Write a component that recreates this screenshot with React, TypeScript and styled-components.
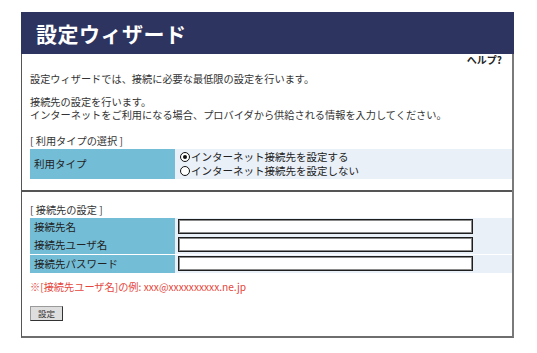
import styled, { createGlobalStyle } from "styled-components";

const GlobalStyle = createGlobalStyle`
  html, body {
    margin: 0;
    padding: 0;
    background: #ffffff;
  }
  body {
    font-family: "Noto Sans CJK JP", "Noto Sans", sans-serif;
    color: #222222;
  }
`;

const ACCOUNT_FIELDS = [
  { label: "接続先名", divided: false },
  { label: "接続先ユーザ名", divided: false },
  { label: "接続先パスワード", divided: true },
];

export default function App() {
  return (
    <>
      <GlobalStyle />
      <Page>
        <Frame>
          <Header>設定ウィザード</Header>
          <HelpLine>ヘルプ?</HelpLine>
          <Section>
            <Paragraph>設定ウィザードでは、接続に必要な最低限の設定を行います。</Paragraph>
            <Paragraph $gap={9}>
              接続先の設定を行います。
              <br />
              インターネットをご利用になる場合、プロバイダから供給される情報を入力してください。
            </Paragraph>
            <SectionTitle $gap={12}>[ 利用タイプの選択 ]</SectionTitle>
            <TypeRow>
              <LabelCell>利用タイプ</LabelCell>
              <ValueCell>
                <RadioOption>
                  <RadioMark $checked />
                  インターネット接続先を設定する
                </RadioOption>
                <RadioOption>
                  <RadioMark />
                  インターネット接続先を設定しない
                </RadioOption>
              </ValueCell>
            </TypeRow>
          </Section>
          <Divider />
          <Section>
            <SectionTitle $gap={11}>[ 接続先の設定 ]</SectionTitle>
            <FieldTable>
              {ACCOUNT_FIELDS.map((field) => (
                <FieldRow key={field.label} $divided={field.divided}>
                  <FieldLabel>{field.label}</FieldLabel>
                  <FieldValue>
                    <TextBox type="text" />
                  </FieldValue>
                </FieldRow>
              ))}
            </FieldTable>
            <Note>※[接続先ユーザ名]の例: xxx@xxxxxxxxxx.ne.jp</Note>
            <SubmitButton type="button">設定</SubmitButton>
          </Section>
        </Frame>
      </Page>
    </>
  );
}

const Page = styled.div`
  width: 537px;
  height: 353px;
  padding: 12px 0 0 21px;
  box-sizing: border-box;
`;

const Frame = styled.div`
  width: 493px;
  height: 326px;
  box-sizing: border-box;
  border-left: 1px solid #555555;
  border-right: 2px solid #7a7a7a;
  border-bottom: 2px solid #6e6e6e;
  background: #ffffff;
`;

const Header = styled.div`
  height: 42px;
  margin-left: -1px;
  margin-right: -2px;
  padding-left: 15px;
  background: #2d3460;
  color: #ffffff;
  font-size: 21px;
  font-weight: 700;
  line-height: 42px;
  letter-spacing: 0.5px;
`;

const HelpLine = styled.div`
  text-align: right;
  padding-right: 10px;
  font-size: 10px;
  font-weight: 700;
  line-height: 12px;
  color: #222222;
`;

const Section = styled.div`
  padding-left: 8px;
`;

const Paragraph = styled.p<{ $gap?: number }>`
  margin: ${(p) => p.$gap ?? 6}px 0 0;
  font-size: 10.2px;
  line-height: 13.5px;
  color: #333333;
`;

const SectionTitle = styled.div<{ $gap: number }>`
  margin-top: ${(p) => p.$gap}px;
  font-size: 10.2px;
  line-height: 13px;
  color: #333333;
`;

const TypeRow = styled.div`
  display: grid;
  grid-template-columns: 145px 1fr;
  height: 30px;
  margin-top: 2px;
`;

const LabelCell = styled.div`
  display: flex;
  align-items: center;
  padding-left: 4px;
  background: #74bdd6;
  font-size: 10.5px;
  color: #222222;
`;

const ValueCell = styled.div`
  display: flex;
  flex-direction: column;
  justify-content: center;
  padding-left: 5px;
  background: #e9f0f8;
`;

const RadioOption = styled.div`
  display: flex;
  align-items: center;
  font-size: 10.5px;
  line-height: 14px;
  color: #222222;
`;

const RadioMark = styled.span<{ $checked?: boolean }>`
  position: relative;
  display: inline-block;
  width: 8px;
  height: 8px;
  margin-right: 1px;
  border: 1px solid #111111;
  border-radius: 50%;
  background: #ffffff;

  &::after {
    content: "";
    display: ${(p) => (p.$checked ? "block" : "none")};
    position: absolute;
    left: 2px;
    top: 2px;
    width: 4px;
    height: 4px;
    border-radius: 50%;
    background: #111111;
  }
`;

const Divider = styled.div`
  height: 2px;
  margin-top: 11px;
  background: #555555;
`;

const FieldTable = styled.div`
  margin-top: 2px;
`;

const FieldRow = styled.div<{ $divided: boolean }>`
  display: grid;
  grid-template-columns: 145px 1fr;
  height: 18px;
  border-top: ${(p) => (p.$divided ? "1px solid #ffffff" : "none")};
`;

const FieldLabel = styled.div`
  display: flex;
  align-items: center;
  padding-left: 4px;
  background: #74bdd6;
  font-size: 10.5px;
  color: #222222;
`;

const FieldValue = styled.div`
  display: flex;
  align-items: center;
  padding-left: 3px;
  background: #e9f0f8;
`;

const TextBox = styled.input`
  width: 295px;
  height: 15px;
  box-sizing: border-box;
  margin: 0;
  padding: 0 2px;
  border: 1px solid #1e1e1e;
  box-shadow: inset 0 0 0 1px #8a8a8a;
  background: #ffffff;
  font-size: 10px;
`;

const Note = styled.div`
  margin-top: 7px;
  font-size: 10.2px;
  line-height: 13px;
  color: #e5463b;
`;

const SubmitButton = styled.button`
  display: block;
  margin-top: 13px;
  width: 33px;
  height: 15px;
  padding: 0;
  border: 1px solid #9a9a9a;
  border-right-color: #333333;
  border-bottom-color: #333333;
  background: #dedede;
  font-family: "Noto Sans CJK JP", sans-serif;
  font-size: 8.5px;
  line-height: 13px;
  color: #333333;
`;
